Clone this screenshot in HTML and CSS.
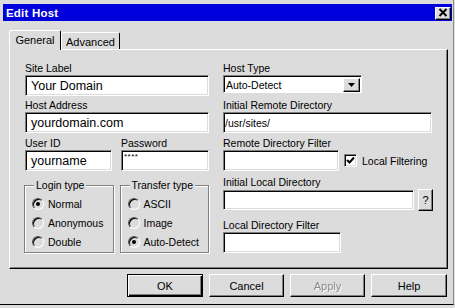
FILE: index.html
```html
<!DOCTYPE html>
<html>
<head>
<meta charset="utf-8">
<title>Edit Host</title>
<link rel="stylesheet" href="styles.css">
</head>
<body>
<div class="window">
  <div class="titlebar">
    <span class="title">Edit Host</span>
    <div class="close">
      <svg width="10" height="9" viewBox="0 0 10 9"><path d="M1.5 1 L8.5 8 M8.5 1 L1.5 8" stroke="#000" stroke-width="2" fill="none"/></svg>
    </div>
  </div>
  <div class="tabs">
    <div class="tab active">General</div>
    <div class="tab">Advanced</div>
  </div>
  <div class="panel">
    <div class="col left">
      <div class="lbl">Site Label</div>
      <div class="input big">Your Domain</div>
      <div class="lbl m3">Host Address</div>
      <div class="input big">yourdomain.com</div>
      <div class="pair">
        <div class="sub">
          <div class="lbl">User ID</div>
          <div class="input big">yourname</div>
        </div>
        <div class="sub">
          <div class="lbl">Password</div>
          <div class="input pw">****</div>
        </div>
      </div>
      <div class="groups">
        <fieldset class="group">
          <legend>Login type</legend>
          <div class="radio-row"><span class="radio checked"></span><span>Normal</span></div>
          <div class="radio-row"><span class="radio"></span><span>Anonymous</span></div>
          <div class="radio-row"><span class="radio"></span><span>Double</span></div>
        </fieldset>
        <fieldset class="group">
          <legend>Transfer type</legend>
          <div class="radio-row"><span class="radio"></span><span>ASCII</span></div>
          <div class="radio-row"><span class="radio"></span><span>Image</span></div>
          <div class="radio-row"><span class="radio checked"></span><span>Auto-Detect</span></div>
        </fieldset>
      </div>
    </div>
    <div class="col right">
      <div class="lbl">Host Type</div>
      <div class="select">
        <span class="sel-text">Auto-Detect</span>
        <span class="sel-btn"><svg width="7" height="4" viewBox="0 0 7 4"><path d="M0 0 H7 L3.5 4 Z" fill="#000"/></svg></span>
      </div>
      <div class="lbl m6">Initial Remote Directory</div>
      <div class="input small w-remote">/usr/sites/</div>
      <div class="lbl m4">Remote Directory Filter</div>
      <div class="row">
        <div class="input small w-filter"></div>
        <span class="check"><svg width="9" height="9" viewBox="0 0 9 9"><path d="M1 4 L3.5 6.5 L8 1.5" stroke="#000" stroke-width="2" fill="none"/></svg></span>
        <span class="check-lbl">Local Filtering</span>
      </div>
      <div class="lbl m5">Initial Local Directory</div>
      <div class="row">
        <div class="input small w-local"></div>
        <div class="qbtn">?</div>
      </div>
      <div class="lbl m8">Local Directory Filter</div>
      <div class="input small w-lfilter"></div>
    </div>
  </div>
  <div class="buttons">
    <div class="btn ok">OK</div>
    <div class="btn">Cancel</div>
    <div class="btn disabled">Apply</div>
    <div class="btn help">Help</div>
  </div>
</div>
</body>
</html>
```
FILE: styles.css
```css
* { box-sizing: border-box; }
html, body { margin: 0; padding: 0; }
body {
  width: 455px;
  height: 308px;
  overflow: hidden;
  background: #dcdcdc;
  font-family: "Liberation Sans", Arial, sans-serif;
  font-size: 10.5px;
  color: #000;
}
.window {
  width: 454px;
  height: 305px;
  border-right: 1px solid #8a8a8a;
  border-bottom: 1px solid #000;
  padding: 4px 1px 0 3px;
  display: flex;
  flex-direction: column;
}
.titlebar {
  height: 17px;
  background: #0000dc;
  display: flex;
  align-items: center;
  justify-content: space-between;
  padding: 0 1px 0 3px;
}
.title {
  color: #fff;
  font-weight: bold;
  font-size: 11.5px;
  letter-spacing: 0.2px;
}
.close {
  width: 16px;
  height: 13px;
  margin-top: 1px;
  background: #dcdcdc;
  border: 1px solid;
  border-color: #fff #000 #000 #fff;
  box-shadow: inset -1px -1px 0 #808080;
  display: flex;
  align-items: center;
  justify-content: center;
  padding-right: 1px;
  padding-bottom: 1px;
}
.close svg { display: block; }
.tabs {
  display: flex;
  align-items: flex-end;
  margin-top: 9px;
  padding-left: 6px;
  height: 19px;
}
.tab {
  height: 17px;
  width: 59px;
  border: 1px solid;
  border-color: #fff #000 transparent #fff;
  border-bottom: none;
  border-radius: 2px 2px 0 0;
  display: flex;
  align-items: center;
  justify-content: center;
  font-size: 11px;
  padding-top: 1px;
}
.tab.active {
  width: 52px;
  height: 20px;
  margin-bottom: -1px;
  position: relative;
  z-index: 1;
  background: #dcdcdc;
  padding-top: 0;
  padding-bottom: 1px;
}
.panel {
  margin-left: 6px;
  width: 439px;
  height: 220px;
  border-top: 1px solid #fff;
  border-left: 1px solid #fff;
  border-right: 1px solid #000;
  border-bottom: 1px solid #000;
  box-shadow: inset -1px -1px 0 #808080;
  padding: 12px 0 0 15px;
  display: flex;
  gap: 14px;
}
.col { display: flex; flex-direction: column; }
.left { width: 184px; }
.right { width: 224px; }
.lbl {
  height: 13px;
  line-height: 13px;
  white-space: nowrap;
}
.m3 { margin-top: 3px; }
.m4 { margin-top: 4px; }
.m5 { margin-top: 5px; }
.m6 { margin-top: 6px; }
.m8 { margin-top: 8px; }
.input {
  height: 21px;
  background: #fff;
  border: 1px solid;
  border-color: #808080 #fff #fff #808080;
  box-shadow: inset 1px 1px 0 #000, inset -1px -1px 0 #dcdcdc;
  display: flex;
  align-items: center;
  white-space: nowrap;
  overflow: hidden;
}
.input.big {
  font-size: 12.5px;
  padding-left: 5px;
}
.input.small {
  font-size: 10.5px;
  padding-left: 1px;
}
.input.pw {
  font-size: 8px;
  align-items: flex-start;
  padding-left: 2px;
  padding-top: 1px;
  letter-spacing: 0.5px;
}
.pair {
  display: flex;
  gap: 9px;
  margin-top: 4px;
}
.sub { width: 88px; display: flex; flex-direction: column; }
.pair .sub:first-child { width: 87px; }
.groups {
  display: flex;
  gap: 6px;
  margin-top: 8px;
  margin-left: -1px;
}
.group {
  width: 90px;
  margin: 0;
  padding: 2px 0 1px 7px;
  border: 1px solid #808080;
  box-shadow: inset 1px 1px 0 #fff, 1px 1px 0 #fff;
  min-inline-size: 0;
}
.group legend {
  padding: 0 2px;
  margin-left: 2px;
  line-height: 13px;
  height: 13px;
  background: #dcdcdc;
  font-size: 10.5px;
}
.radio-row {
  height: 19px;
  display: flex;
  align-items: center;
  gap: 4px;
  white-space: nowrap;
}
.radio {
  width: 12px;
  height: 12px;
  border-radius: 50%;
  border: 1px solid;
  border-color: #555 #fff #fff #555;
  box-shadow: inset 1px 1px 0 #000;
  position: relative;
  flex: none;
}
.radio.checked::after {
  content: "";
  position: absolute;
  left: 3px;
  top: 3px;
  width: 4px;
  height: 4px;
  border-radius: 50%;
  background: #000;
}
.select {
  width: 139px;
  height: 18px;
  background: #fff;
  border: 1px solid;
  border-color: #808080 #fff #fff #808080;
  box-shadow: inset 1px 1px 0 #000;
  display: flex;
  align-items: center;
  justify-content: space-between;
  padding: 2px 1px 1px 2px;
}
.sel-text { font-size: 10.5px; }
.sel-btn {
  width: 17px;
  height: 14px;
  background: #dcdcdc;
  border: 1px solid;
  border-color: #fff #000 #000 #fff;
  box-shadow: inset -1px -1px 0 #808080;
  display: flex;
  align-items: center;
  justify-content: center;
}
.sel-btn svg { display: block; }
.w-remote { width: 209px; }
.w-filter { width: 116px; }
.w-local { width: 191px; height: 20px; }
.w-lfilter { width: 118px; }
.row {
  display: flex;
  align-items: center;
}
.check {
  width: 13px;
  height: 13px;
  margin-left: 5px;
  background: #fff;
  border: 1px solid;
  border-color: #808080 #fff #fff #808080;
  box-shadow: inset 1px 1px 0 #000, inset -1px -1px 0 #dcdcdc;
  display: flex;
  align-items: center;
  justify-content: center;
  flex: none;
}
.check svg { display: block; }
.check-lbl { margin-left: 5px; white-space: nowrap; }
.qbtn {
  width: 15px;
  height: 22px;
  margin-left: 4px;
  border: 1px solid;
  border-color: #fff #000 #000 #fff;
  box-shadow: inset -1px -1px 0 #808080;
  display: flex;
  align-items: center;
  justify-content: center;
  font-size: 11px;
}
.buttons {
  display: flex;
  justify-content: flex-end;
  gap: 6px;
  margin-top: 5px;
  padding-right: 5px;
  height: 23px;
}
.btn {
  width: 75px;
  height: 23px;
  border: 1px solid;
  border-color: #fff #000 #000 #fff;
  box-shadow: inset -1px -1px 0 #808080;
  display: flex;
  align-items: center;
  justify-content: center;
  font-size: 11px;
}
.btn.ok {
  width: 76px;
  border-color: #000;
  box-shadow: inset 1px 1px 0 #fff, inset -1px -1px 0 #000, inset -2px -2px 0 #808080;
}
.btn.help { width: 76px; }
.btn.disabled {
  color: #8a8a8a;
  text-shadow: 1px 1px 0 #fff;
}
```
